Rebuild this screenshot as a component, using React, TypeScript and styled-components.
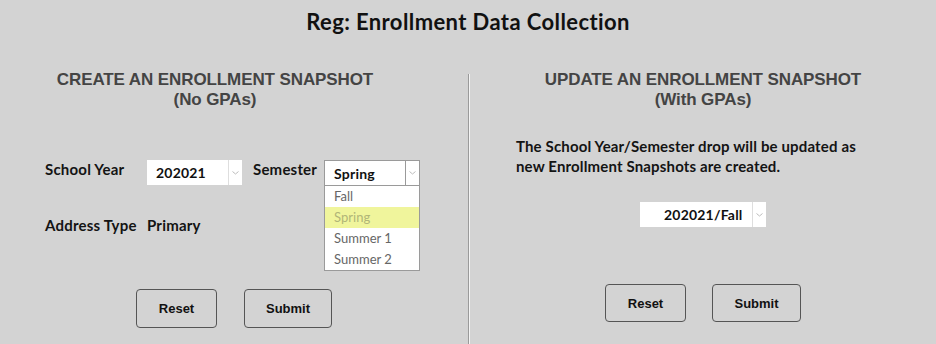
import React from "react";
import styled, { createGlobalStyle } from "styled-components";

const GlobalStyle = createGlobalStyle`
  html, body {
    margin: 0;
    padding: 0;
    background: #d3d3d3;
  }
  body {
    font-family: "Lato", "Noto Sans", sans-serif;
    color: #141414;
  }
`;

const Page = styled.div`
  width: 936px;
  height: 344px;
  background: #d3d3d3;
  overflow: hidden;
`;

const Title = styled.h1`
  margin: 0;
  padding-top: 9px;
  height: 70px;
  box-sizing: border-box;
  font-size: 22px;
  line-height: 26px;
  font-weight: 700;
  letter-spacing: 0.4px;
  text-align: center;
  color: #111;
`;

const Columns = styled.div`
  display: flex;
  height: 274px;
`;

const Column = styled.div<{ $width: number }>`
  width: ${(p) => p.$width}px;
  display: flex;
  flex-direction: column;
  box-sizing: border-box;
`;

const Divider = styled.div`
  margin-top: 4px;
  width: 1px;
  background: #9a9a9a;
  border-right: 1px solid #f4f4f4;
`;

const Heading = styled.h2<{ $shift?: number }>`
  margin: 0;
  padding-right: ${(p) => p.$shift || 0}px;
  font-family: "Liberation Sans", Arial, sans-serif;
  font-size: 17px;
  line-height: 20px;
  font-weight: 700;
  letter-spacing: -0.1px;
  color: #444;
  text-align: center;
`;

const FormRow = styled.div<{ $top: number }>`
  display: flex;
  align-items: flex-start;
  margin-top: ${(p) => p.$top}px;
  padding-left: 45px;
`;

const Label = styled.span<{ $width?: number }>`
  width: ${(p) => (p.$width ? `${p.$width}px` : "auto")};
  font-size: 15px;
  line-height: 18px;
  font-weight: 700;
  letter-spacing: 0.2px;
`;

const SideLabel = styled(Label)`
  margin: 0 7px 0 11px;
`;

const SelectWrap = styled.div`
  position: relative;
`;

const SelectBox = styled.div<{ $width: number; $bordered?: boolean }>`
  display: flex;
  width: ${(p) => p.$width}px;
  height: ${(p) => (p.$bordered ? 26 : 25)}px;
  box-sizing: border-box;
  background: #fff;
  border: ${(p) => (p.$bordered ? "1px solid #9a9a9a" : "none")};
`;

const SelectValue = styled.div<{ $padLeft: number }>`
  flex: 1;
  padding-left: ${(p) => p.$padLeft}px;
  display: flex;
  align-items: center;
  font-size: 14px;
  font-weight: 700;
  letter-spacing: 0.2px;
  color: #111;
`;

const Arrow = styled.div<{ $dark?: boolean }>`
  width: 13px;
  border-left: 1px solid ${(p) => (p.$dark ? "#9a9a9a" : "#dedede")};
  display: flex;
  align-items: center;
  justify-content: center;
`;

const DropList = styled.ul`
  position: absolute;
  top: 26px;
  left: 0;
  width: 96px;
  margin: 0;
  padding: 0;
  list-style: none;
  background: #fff;
  border: 1px solid #9a9a9a;
  border-top: none;
  box-sizing: border-box;
`;

const DropItem = styled.li<{ $active?: boolean }>`
  height: 21px;
  line-height: 21px;
  padding-left: 9px;
  font-size: 13px;
  color: ${(p) => (p.$active ? "#b1b678" : "#666")};
  background: ${(p) => (p.$active ? "#f0f59c" : "transparent")};
`;

const Note = styled.p`
  margin: 26px 0 0;
  padding-left: 46px;
  font-size: 15px;
  line-height: 20px;
  font-weight: 700;
  letter-spacing: 0.15px;
`;

const Center = styled.div<{ $top: number; $gap?: number }>`
  display: flex;
  justify-content: center;
  gap: ${(p) => p.$gap || 26}px;
  margin-top: ${(p) => p.$top}px;
`;

const Button = styled.button<{ $width: number; $height: number }>`
  width: ${(p) => p.$width}px;
  height: ${(p) => p.$height}px;
  background: transparent;
  border: 1px solid #555;
  border-radius: 4px;
  font-family: "Liberation Sans", Arial, sans-serif;
  font-size: 13px;
  font-weight: 700;
  color: #111;
  cursor: pointer;
`;

const Chevron = () => (
  <svg width="7" height="4" viewBox="0 0 7 4">
    <path d="M0.5 0.5 L3.5 3 L6.5 0.5" fill="none" stroke="#bdbdbd" strokeWidth="1" />
  </svg>
);

type SelectProps = {
  value: string;
  width: number;
  padLeft: number;
  bordered?: boolean;
  options?: string[];
};

const Select: React.FC<SelectProps> = ({ value, width, padLeft, bordered, options }) => (
  <SelectWrap>
    <SelectBox $width={width} $bordered={bordered}>
      <SelectValue $padLeft={padLeft}>{value}</SelectValue>
      <Arrow $dark={bordered}>
        <Chevron />
      </Arrow>
    </SelectBox>
    {options && (
      <DropList>
        {options.map((o) => (
          <DropItem key={o} $active={o === value}>
            {o}
          </DropItem>
        ))}
      </DropList>
    )}
  </SelectWrap>
);

export default function App() {
  return (
    <Page>
      <GlobalStyle />
      <Title>Reg: Enrollment Data Collection</Title>
      <Columns>
        <Column $width={468}>
          <Heading $shift={38}>
            CREATE AN ENROLLMENT SNAPSHOT
            <br />
            (No GPAs)
          </Heading>
          <FormRow $top={50}>
            <Label $width={102}>School Year</Label>
            <Select value="202021" width={95} padLeft={9} />
            <SideLabel>Semester</SideLabel>
            <Select
              value="Spring"
              width={96}
              padLeft={9}
              bordered
              options={["Fall", "Spring", "Summer 1", "Summer 2"]}
            />
          </FormRow>
          <FormRow $top={30}>
            <Label $width={102}>Address Type</Label>
            <Label>Primary</Label>
          </FormRow>
          <Center $top={55} $gap={27}>
            <Button $width={81} $height={39}>Reset</Button>
            <Button $width={88} $height={39}>Submit</Button>
          </Center>
        </Column>
        <Divider />
        <Column $width={466}>
          <Heading>
            UPDATE AN ENROLLMENT SNAPSHOT
            <br />
            (With GPAs)
          </Heading>
          <Note>
            The School Year/Semester drop will be updated as
            <br />
            new Enrollment Snapshots are created.
          </Note>
          <Center $top={26}>
            <Select value="202021/Fall" width={126} padLeft={24} />
          </Center>
          <Center $top={57}>
            <Button $width={81} $height={38}>Reset</Button>
            <Button $width={89} $height={38}>Submit</Button>
          </Center>
        </Column>
      </Columns>
    </Page>
  );
}
